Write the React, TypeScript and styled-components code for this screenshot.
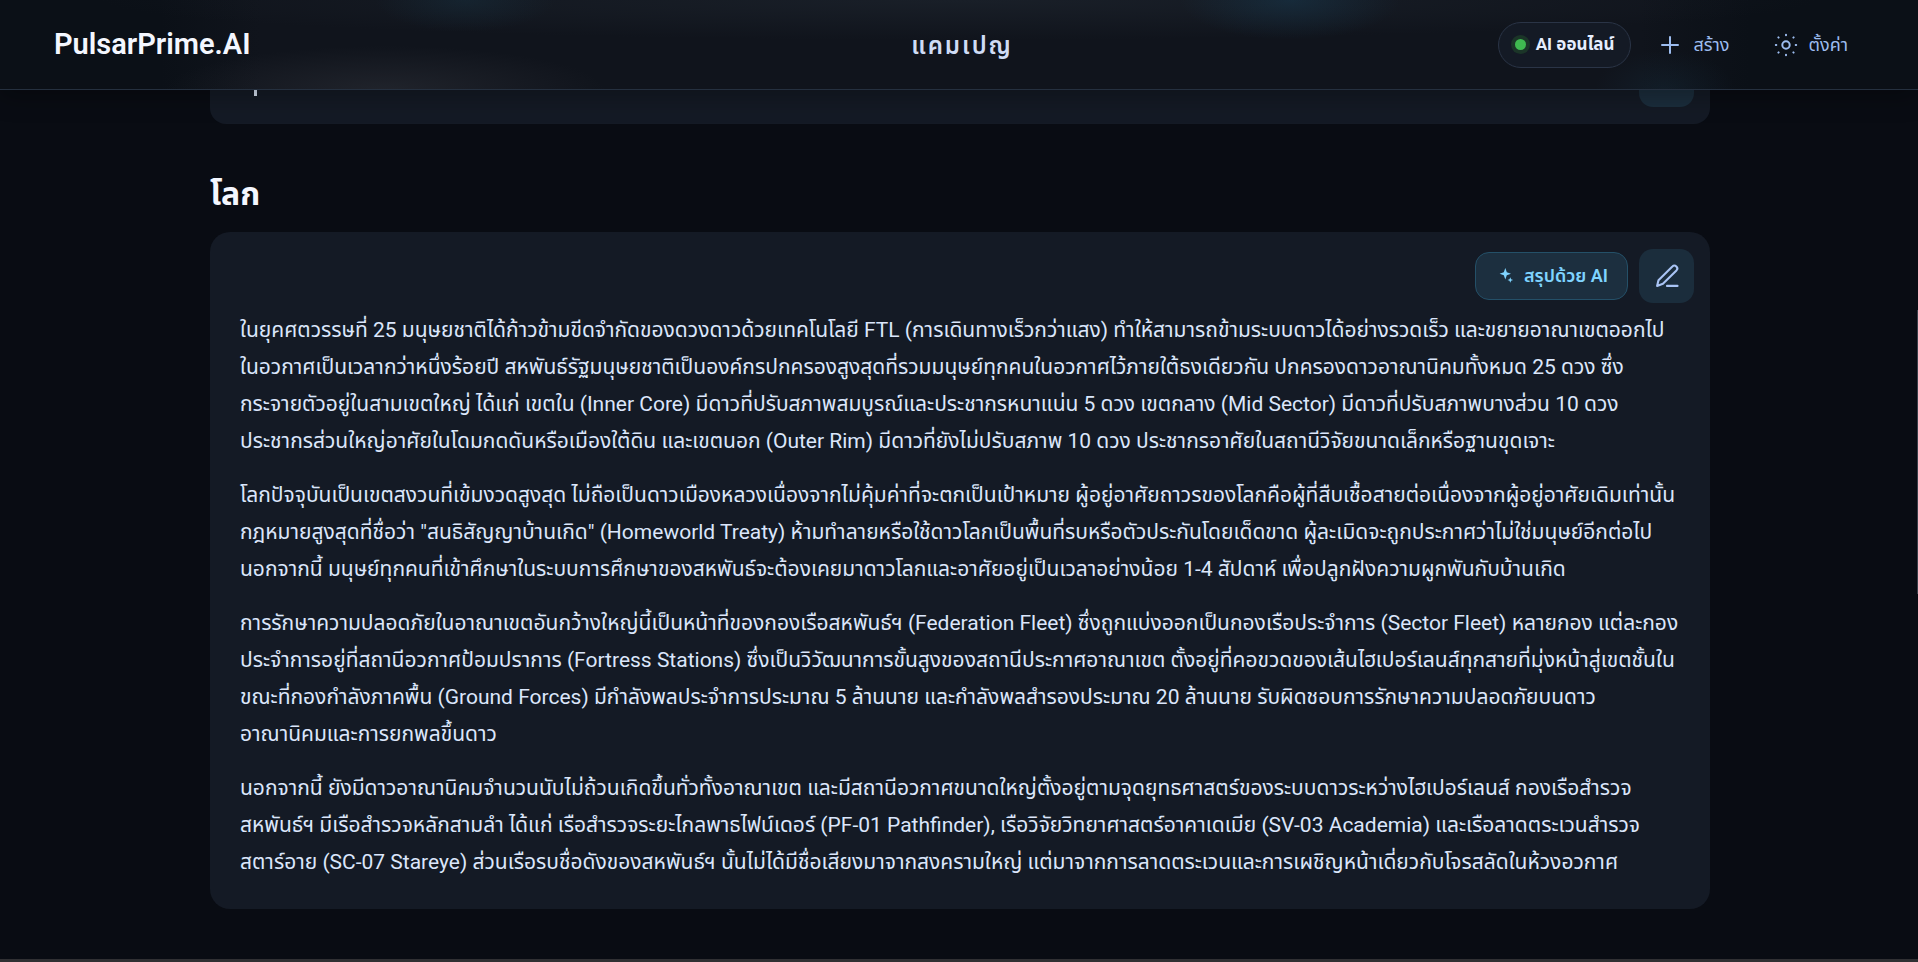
import React from "react";
import styled, { createGlobalStyle } from "styled-components";

const Global = createGlobalStyle`
  *, *::before, *::after { box-sizing: border-box; }
  html { background: #090c13; scrollbar-width: none; }
  body {
    margin: 0;
    background: #090c13;
    color: #dbe6ff;
    font-family: Roboto, "Noto Sans Thai", sans-serif;
  }
  button { font: inherit; cursor: pointer; }
`;

const Page = styled.div`
  display: flex;
  flex-direction: column;
  min-height: 100vh;
  position: relative;
`;

const TopBar = styled.header`
  display: grid;
  grid-template-columns: 1fr auto 1fr;
  align-items: center;
  height: 90px;
  padding: 0 48px 0 54px;
  border-bottom: 1px solid #25303f;
  box-shadow: 0 6px 24px rgba(0, 0, 0, 0.3);
  position: relative;
  background:
    radial-gradient(ellipse 90px 32px at 465px 0, rgba(24, 60, 80, 0.3), transparent),
    radial-gradient(ellipse 110px 40px at 1290px 0, rgba(24, 66, 92, 0.4), transparent),
    radial-gradient(ellipse 70px 40px at 1665px 90px, rgba(24, 50, 68, 0.3), transparent),
    radial-gradient(ellipse 220px 44px at 385px 90px, rgba(56, 58, 66, 0.4), transparent),
    radial-gradient(ellipse 860px 40px at 50% 0, rgba(34, 42, 52, 0.5), transparent),
    linear-gradient(90deg, #0b1017 160px, #10141c 260px, #10141c 1640px, #0b1017 1750px);
`;

const Brand = styled.a`
  padding-bottom: 2px;
  color: #f4f7ff;
  font-size: 29px;
  font-weight: 600;
  line-height: 36px;
  text-decoration: none;
`;

const BarTitle = styled.h1`
  margin: 0;
  padding-top: 2px;
  color: #cfdcf5;
  font-size: 24px;
  font-weight: 600;
  line-height: 36px;
  letter-spacing: 2px;
`;

const BarActions = styled.nav`
  display: flex;
  align-items: center;
  justify-content: flex-end;
`;

const Status = styled.div`
  display: flex;
  align-items: center;
  gap: 10px;
  height: 46px;
  margin-right: 5px;
  padding: 0 16px;
  border: 1px solid #2a3446;
  border-radius: 23px;
  background: #141a25;
  color: #e6eeff;
  font-size: 17px;
  font-weight: 700;
`;

const StatusDot = styled.span`
  width: 11px;
  height: 11px;
  border-radius: 50%;
  background: #3fb950;
  box-shadow: 0 0 0 4px #1b3528;
`;

const BarButton = styled.button`
  display: flex;
  align-items: center;
  gap: 11px;
  padding: 8px 22px;
  border: 0;
  background: none;
  color: #9dbdf0;
  font-size: 18px;
  line-height: 24px;
`;

const Main = styled.main`
  width: 100%;
  max-width: 1502px;
  margin: 0 auto;
  padding-left: 2px;
  flex: 1;
`;

const PreviousCard = styled.section`
  display: flex;
  justify-content: space-between;
  align-items: flex-start;
  height: 34px;
  padding: 0 16px 0 44px;
  border-radius: 0 0 16px 16px;
  background: #141a25;
`;

const TextTail = styled.span`
  width: 3px;
  height: 6px;
  background: #d5dff0;
`;

const TabEnd = styled.button`
  width: 55px;
  height: 17px;
  border: 0;
  border-radius: 0 0 14px 14px;
  background: #1b2d3c;
`;

const SectionTitle = styled.h2`
  margin: 50px 0 18px;
  color: #f4f7ff;
  font-size: 32px;
  font-weight: 700;
  line-height: 40px;
`;

const Card = styled.section`
  padding: 17px 16px 28px 30px;
  border-radius: 20px;
  background: #141a25;
`;

const CardTools = styled.div`
  display: flex;
  align-items: center;
  justify-content: flex-end;
  gap: 11px;
  margin-bottom: 9px;
`;

const SummaryButton = styled.button`
  display: flex;
  align-items: center;
  gap: 8px;
  height: 48px;
  padding: 0 19px 0 22px;
  border: 1px solid #245068;
  border-radius: 14px;
  background: #1c2f3f;
  color: #7fd4ff;
  font-size: 18px;
  font-weight: 600;
`;

const EditButton = styled.button`
  display: grid;
  place-items: center;
  width: 55px;
  height: 54px;
  padding: 0;
  border: 0;
  border-radius: 14px;
  background: #1b2d3c;
  color: #a9c4f5;
`;

const Prose = styled.div`
  padding-right: 14px;
  color: #dbe6fb;
  font-size: 21px;
  line-height: 37px;
`;

const Paragraph = styled.p`
  margin: 0 0 17px;
  &:last-child { margin-bottom: 0; }
`;

const Name = styled.span`
  white-space: nowrap;
`;

const BottomEdge = styled.footer`
  height: 3px;
  background: #303033;
`;

const ScrollThumb = styled.div`
  position: absolute;
  top: 310px;
  right: 0;
  width: 1px;
  height: 284px;
  background: #3a404a;
`;

const paragraphs: string[] = [
  "ในยุคศตวรรษที่ 25 มนุษยชาติได้ก้าวข้ามขีดจำกัดของดวงดาวด้วยเทคโนโลยี FTL (การเดินทางเร็วกว่าแสง) ทำให้สามารถข้ามระบบดาวได้อย่างรวดเร็ว และขยายอาณาเขตออกไปในอวกาศเป็นเวลากว่าหนึ่งร้อยปี สหพันธ์รัฐมนุษยชาติเป็นองค์กรปกครองสูงสุดที่รวมมนุษย์ทุกคนในอวกาศไว้ภายใต้ธงเดียวกัน ปกครองดาวอาณานิคมทั้งหมด 25 ดวง ซึ่งกระจายตัวอยู่ในสามเขตใหญ่ ได้แก่ เขตใน (Inner Core) มีดาวที่ปรับสภาพสมบูรณ์และประชากรหนาแน่น 5 ดวง เขตกลาง (Mid Sector) มีดาวที่ปรับสภาพบางส่วน 10 ดวง ประชากรส่วนใหญ่อาศัยในโดมกดดันหรือเมืองใต้ดิน และเขตนอก (Outer Rim) มีดาวที่ยังไม่ปรับสภาพ 10 ดวง ประชากรอาศัยในสถานีวิจัยขนาดเล็กหรือฐานขุดเจาะ",
  "โลกปัจจุบันเป็นเขตสงวนที่เข้มงวดสูงสุด ไม่ถือเป็นดาวเมืองหลวงเนื่องจากไม่คุ้มค่าที่จะตกเป็นเป้าหมาย ผู้อยู่อาศัยถาวรของโลกคือผู้ที่สืบเชื้อสายต่อเนื่องจากผู้อยู่อาศัยเดิมเท่านั้น กฎหมายสูงสุดที่ชื่อว่า \"สนธิสัญญาบ้านเกิด\" (Homeworld Treaty) ห้ามทำลายหรือใช้ดาวโลกเป็นพื้นที่รบหรือตัวประกันโดยเด็ดขาด ผู้ละเมิดจะถูกประกาศว่าไม่ใช่มนุษย์อีกต่อไป นอกจากนี้ มนุษย์ทุกคนที่เข้าศึกษาในระบบการศึกษาของสหพันธ์จะต้องเคยมาดาวโลกและอาศัยอยู่เป็นเวลาอย่างน้อย 1-4 สัปดาห์ เพื่อปลูกฝังความผูกพันกับบ้านเกิด",
  "การรักษาความปลอดภัยในอาณาเขตอันกว้างใหญ่นี้เป็นหน้าที่ของกองเรือสหพันธ์ฯ (Federation Fleet) ซึ่งถูกแบ่งออกเป็นกองเรือประจำการ (Sector Fleet) หลายกอง แต่ละกองประจำการอยู่ที่สถานีอวกาศป้อมปราการ (Fortress Stations) ซึ่งเป็นวิวัฒนาการขั้นสูงของสถานีประกาศอาณาเขต ตั้งอยู่ที่คอขวดของเส้นไฮเปอร์เลนส์ทุกสายที่มุ่งหน้าสู่เขตชั้นใน ขณะที่กองกำลังภาคพื้น (Ground Forces) มีกำลังพลประจำการประมาณ 5 ล้านนาย และกำลังพลสำรองประมาณ 20 ล้านนาย รับผิดชอบการรักษาความปลอดภัยบนดาวอาณานิคมและการยกพลขึ้นดาว",
  "นอกจากนี้ ยังมีดาวอาณานิคมจำนวนนับไม่ถ้วนเกิดขึ้นทั่วทั้งอาณาเขต และมีสถานีอวกาศขนาดใหญ่ตั้งอยู่ตามจุดยุทธศาสตร์ของระบบดาวระหว่างไฮเปอร์เลนส์ กองเรือสำรวจสหพันธ์ฯ มีเรือสำรวจหลักสามลำ ได้แก่ เรือสำรวจระยะไกลพาธไฟน์เดอร์ (PF-01 Pathfinder), เรือวิจัยวิทยาศาสตร์อาคาเดเมีย (SV-03 Academia) และเรือลาดตระเวนสำรวจสตาร์อาย (SC-07 Stareye) ส่วนเรือรบชื่อดังของสหพันธ์ฯ นั้นไม่ได้มีชื่อเสียงมาจากสงครามใหญ่ แต่มาจากการลาดตระเวนและการเผชิญหน้าเดี่ยวกับโจรสลัดในห้วงอวกาศ",
];

// Names that follow "สำรวจ" are kept whole; a line may break just before one.
const NAMES = /(?<=สำรวจ)(สหพันธ์ฯ|สตาร์อาย)/;

const withNames = (text: string) =>
  text.split(NAMES).map((part, i) =>
    i % 2 ? (
      <React.Fragment key={i}>
        <wbr />
        <Name>{part}</Name>
      </React.Fragment>
    ) : (
      part
    ),
  );

const PlusIcon = () => (
  <svg width="24" height="24" viewBox="0 0 24 24" fill="none" stroke="currentColor" strokeWidth="2" strokeLinecap="round" aria-hidden="true">
    <path d="M12 4v16M4 12h16" />
  </svg>
);

const SunIcon = () => (
  <svg width="24" height="24" viewBox="0 0 24 24" fill="none" stroke="currentColor" strokeWidth="2" strokeLinecap="round" aria-hidden="true">
    <circle cx="12" cy="12" r="3.700" />
    <path d="M12 1.800v.5M12 21.700v.5M1.800 12h.5M21.700 12h.5M4.400 4.400l.2.2M19.400 19.400l.2.2M4.400 19.600l.2-.2M19.400 4.600l.2-.2" />
  </svg>
);

const SparkIcon = () => (
  <svg width="18" height="18" viewBox="0 0 18 18" fill="currentColor" aria-hidden="true">
    <path d="M7.300 1l1.500 4.200L13 6.700 8.800 8.200 7.300 12.400 5.800 8.200 1.600 6.700 5.800 5.200z" />
    <path d="M12.300 10.200l.8 2 2 .8-2 .8-.8 2-.8-2-2-.8 2-.8z" />
  </svg>
);

const PenIcon = () => (
  <svg width="28" height="28" viewBox="0 0 24 24" fill="none" stroke="currentColor" strokeWidth="1.800" strokeLinecap="round" strokeLinejoin="round" aria-hidden="true">
    <path d="M12 20.500h9" />
    <path d="M16.600 3.900a2.200 2.200 0 0 1 3.500 3.300L8.500 18.600 3.500 20.500l1.200-4.900z" />
  </svg>
);

export default function App() {
  return (
    <Page>
      <Global />
      <TopBar>
        <Brand href="#">PulsarPrime.AI</Brand>
        <BarTitle>แคมเปญ</BarTitle>
        <BarActions>
          <Status><StatusDot />AI ออนไลน์</Status>
          <BarButton type="button"><PlusIcon />สร้าง</BarButton>
          <BarButton type="button"><SunIcon />ตั้งค่า</BarButton>
        </BarActions>
      </TopBar>
      <Main>
        <PreviousCard>
          <TextTail />
          <TabEnd type="button" aria-label="แก้ไข" />
        </PreviousCard>
        <SectionTitle>โลก</SectionTitle>
        <Card>
          <CardTools>
            <SummaryButton type="button"><SparkIcon />สรุปด้วย AI</SummaryButton>
            <EditButton type="button" aria-label="แก้ไข"><PenIcon /></EditButton>
          </CardTools>
          <Prose>
            {paragraphs.map((text, i) => (
              <Paragraph key={i}>{withNames(text)}</Paragraph>
            ))}
          </Prose>
        </Card>
      </Main>
      <BottomEdge />
      <ScrollThumb />
    </Page>
  );
}
